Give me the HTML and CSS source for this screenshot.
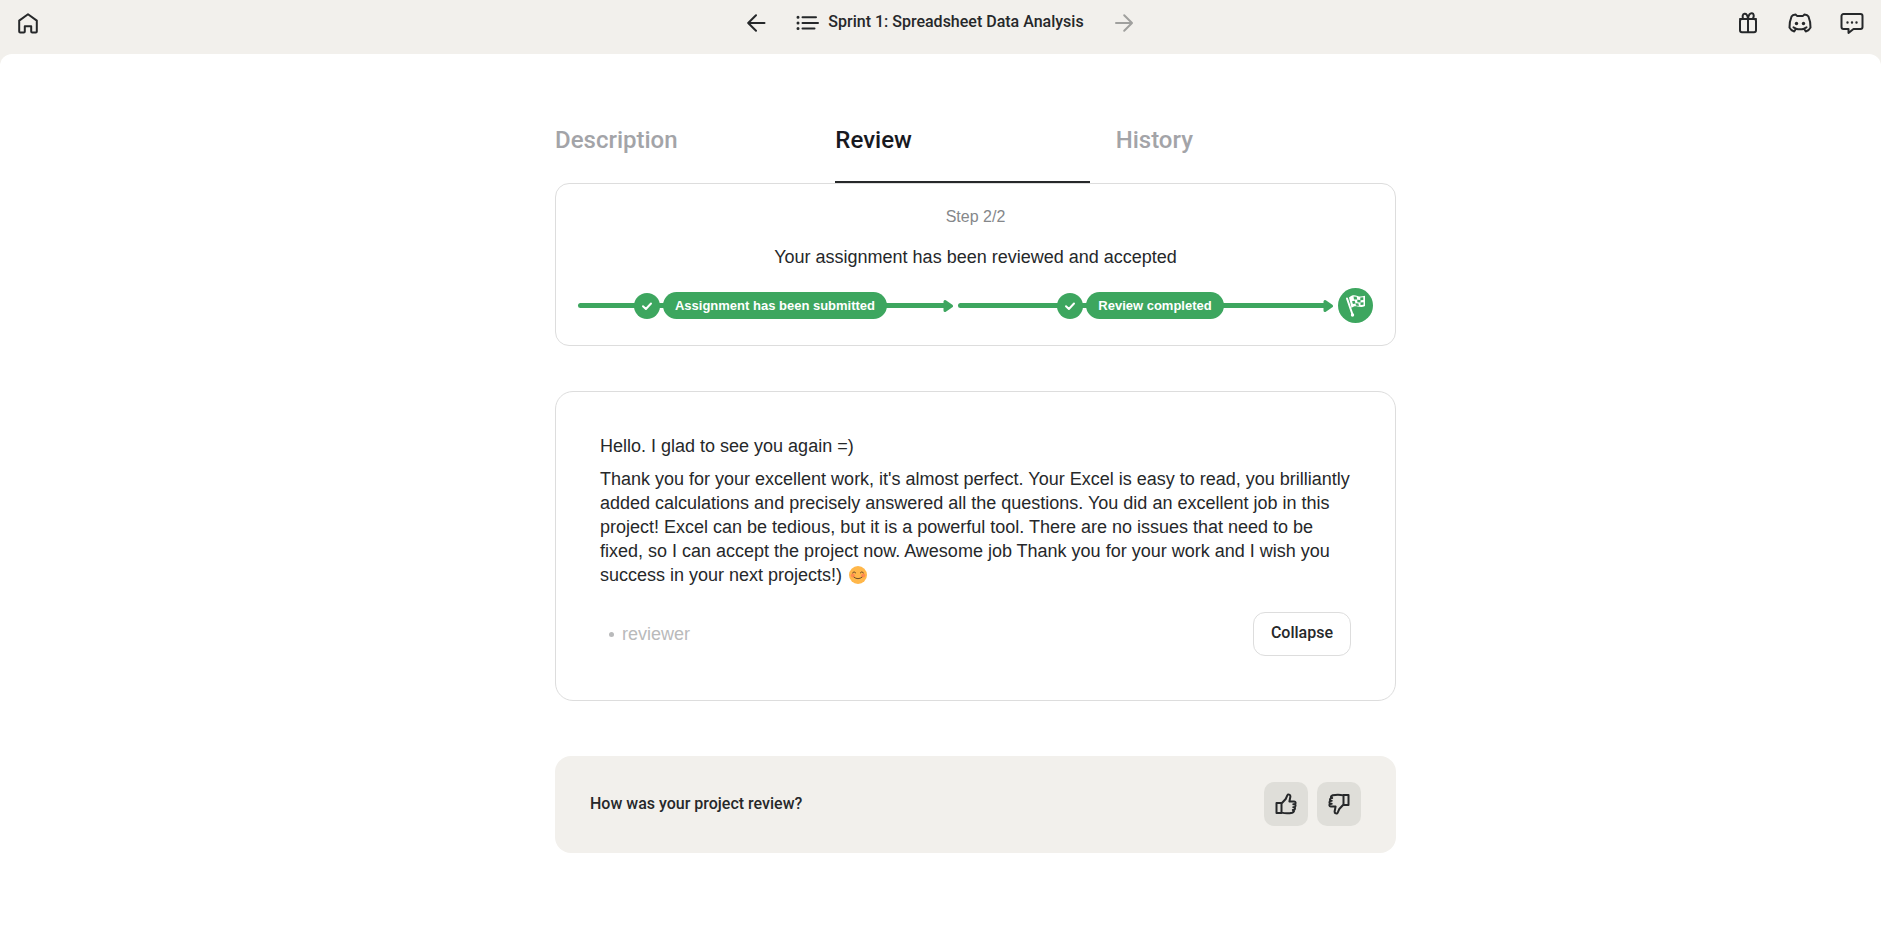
FILE: index.html
```html
<!DOCTYPE html>
<html lang="en">
<head>
<meta charset="utf-8">
<meta name="viewport" content="width=device-width, initial-scale=1">
<title>Sprint 1: Spreadsheet Data Analysis</title>
<link rel="stylesheet" href="styles.css">
</head>
<body>
<header class="topbar">
  <a class="icon-btn" href="#" aria-label="Home">
    <svg class="icon" viewBox="0 0 24 24"><path d="M3.2 20.4V9.6L12 3.2l8.800 6.400V20.400a1 1 0 0 1-1 1H16.200a1 1 0 0 1-1-1V15.300H8.800V20.400a1 1 0 0 1-1 1H4.200a1 1 0 0 1-1-1Z"/></svg>
  </a>
  <nav class="topbar-nav">
    <a class="icon-btn" href="#" aria-label="Previous">
      <svg class="icon" viewBox="0 0 24 24"><path d="M20.500 12H4.500M12 4.200 4.200 12l7.800 7.800"/></svg>
    </a>
    <button class="sprint" type="button">
      <svg class="icon" viewBox="0 0 24 24"><path d="M6.500 6.200H20M6.500 12H22M6.500 17.600H18.500"/><path class="dots" d="M2 6.200h.01M2 12h.01M2 17.600h.01"/></svg>
      <span class="sprint-title">Sprint 1: Spreadsheet Data Analysis</span>
    </button>
    <a class="icon-btn icon-btn-muted" href="#" aria-label="Next">
      <svg class="icon" viewBox="0 0 24 24"><path d="M4 12h15.500M12.200 4.200 20 12l-7.800 7.800"/></svg>
    </a>
  </nav>
  <div class="topbar-tools">
    <button class="icon-btn" type="button" aria-label="Gifts">
      <svg class="icon" viewBox="0 0 24 24"><rect x="4" y="8" width="16" height="13.200" rx="2"/><path d="M4 8h16M12 8v13M12 7.500C11.500 4 10 2.500 8.500 2.700 6.500 3 6.300 5.500 7 7.500M12 7.500C12.500 4 14 2 16 2.300c2 .3 2.200 3 1 5.200"/></svg>
    </button>
    <button class="icon-btn" type="button" aria-label="Discord">
      <svg class="icon" viewBox="0 0 24 24"><path d="M7.500 3.400 9 4.900h6l1.500-1.500c2 .2 3.200.9 4 2.200 1.300 3 2 7.100 2 11-1 2-2.800 3.400-4.700 3.800L16 17.700c-2.500.7-5.500.7-8 0l-1.800 2.700c-1.900-.4-3.700-1.800-4.700-3.800 0-3.900.7-8 2-11 .8-1.300 2-2 4-2.200ZM5.500 16.300 8 17.700M18.500 16.300 16 17.700"/><circle class="solid" cx="8.500" cy="12.500" r="1.700"/><circle class="solid" cx="15.500" cy="12.500" r="1.700"/></svg>
    </button>
    <button class="icon-btn" type="button" aria-label="Messages">
      <svg class="icon" viewBox="0 0 24 24"><path d="M3.500 3h17a2 2 0 0 1 2 2v11a2 2 0 0 1-2 2h-7L8.500 22V18h-5a2 2 0 0 1-2-2V5a2 2 0 0 1 2-2Z"/><path class="dots-small" d="M7.500 11.500h.01M12 11.500h.01M16.500 11.500h.01"/></svg>
    </button>
  </div>
</header>

<main class="sheet">
  <div class="column">
    <nav class="tabs">
      <a class="tab" href="#">Description</a>
      <a class="tab tab-active" href="#" aria-current="page">Review</a>
      <a class="tab" href="#">History</a>
    </nav>

    <section class="status">
      <p class="status-step">Step 2/2</p>
      <h1 class="status-title">Your assignment has been reviewed and accepted</h1>
      <div class="progress">
        <div class="stage">
          <span class="check"><svg class="check-mark" viewBox="0 0 12 12"><path d="M2 6.200 4.900 9 10 3.500"/></svg></span>
          <span class="pill">Assignment has been submitted</span>
          <svg class="arrow-head" viewBox="0 0 10 14"><path d="M2 2.500v9L8.500 7Z"/></svg>
        </div>
        <div class="stage">
          <span class="check"><svg class="check-mark" viewBox="0 0 12 12"><path d="M2 6.200 4.900 9 10 3.500"/></svg></span>
          <span class="pill">Review completed</span>
          <svg class="arrow-head" viewBox="0 0 10 14"><path d="M2 2.500v9L8.500 7Z"/></svg>
        </div>
        <svg class="finish" viewBox="0 0 35 35">
          <circle class="finish-disc" cx="17.500" cy="17.500" r="17.500"/>
          <path class="finish-pole" d="M9 10.500 14.500 26.500"/>
          <circle class="finish-white" cx="14.500" cy="27" r="1.700"/>
          <path class="finish-white" d="M11 9.500C14 6.500 17 7 19.500 8s5 .5 7.500-.3V18c-3 1.500-5 1-7.500.5s-4.500 0-6 1.500Z"/>
          <path class="finish-check" d="m15.500 8.500 3.200.3.500 2.800-3.200-.2ZM22.300 9.500l3-.2v2.600l-3 .3ZM19.300 11.700l3.200.3v2.600l-3.200-.3ZM14 13.300l2.700-.6.800 2.700-2.600.6ZM22.500 14.600l3-.3v2.500l-3 .3ZM17.600 15.300l2.900.2.300 2.400-2.900-.3Z"/>
        </svg>
      </div>
    </section>

    <article class="review">
      <p class="review-text">Hello. I glad to see you again =)</p>
      <p class="review-text">Thank you for your excellent work, it's almost perfect. Your Excel is easy to read, you brilliantly added calculations and precisely answered all the questions. You did an excellent job in this project! Excel can be tedious, but it is a powerful tool. There are no issues that need to be fixed, so I can accept the project now. Awesome job Thank you for your work and I wish you success in your next projects!) <svg class="smile" viewBox="0 0 18 18" role="img" aria-label="Smiling face"><circle class="smile-face" cx="9" cy="9" r="9"/><circle class="smile-cheek" cx="3.800" cy="9.500" r="2"/><circle class="smile-cheek" cx="14.200" cy="9.500" r="2"/><path d="M3.500 6.800q1.500-2.300 3.200 0M11.300 6.800q1.500-2.300 3.200 0M5 11.200q4 3.200 8 0"/></svg></p>
      <footer class="review-foot">
        <ul class="review-author"><li class="review-role">reviewer</li></ul>
        <button class="collapse" type="button">Collapse</button>
      </footer>
    </article>

    <section class="feedback">
      <h2 class="feedback-title">How was your project review?</h2>
      <div class="feedback-votes">
        <button class="vote" type="button" aria-label="Good">
          <svg class="icon" viewBox="0 0 24 24"><path d="M2.500 11h5V21h-5ZM7.500 11.500l4.200-4.500 1.700-3.800c.5-1.200 3.200-.8 3 1.300l-1 5h4.800c1.600 0 1.800 1.800.8 2.600l-1.700.1h1.700c.8.800.7 2.400-.3 2.900l-1.400.1h1.400c.6.900.3 2.300-.7 2.700h-1.200 1.200c.3 1.300-.3 2.200-1.800 2.800-3 .8-7 .9-10.700-.1"/></svg>
        </button>
        <button class="vote" type="button" aria-label="Bad">
          <svg class="icon icon-flip" viewBox="0 0 24 24"><path d="M2.500 11h5V21h-5ZM7.500 11.500l4.200-4.500 1.700-3.800c.5-1.200 3.200-.8 3 1.300l-1 5h4.800c1.600 0 1.800 1.800.8 2.600l-1.700.1h1.700c.8.800.7 2.400-.3 2.900l-1.400.1h1.400c.6.900.3 2.300-.7 2.700h-1.200 1.200c.3 1.300-.3 2.200-1.800 2.800-3 .8-7 .9-10.700-.1"/></svg>
        </button>
      </div>
    </section>
  </div>
</main>
</body>
</html>
```

FILE: styles.css
```css
:root {
  --ink: #26282a;
  --sand: #f2f0ec;
  --line: #dddddd;
  --green: #3da65f;
  --text-font: "Liberation Sans", Arial, sans-serif;
  --ui-font: Roboto, "Liberation Sans", sans-serif;
}

* { box-sizing: border-box; }

body {
  margin: 0;
  min-height: 100vh;
  display: flex;
  flex-direction: column;
  background: var(--sand);
  color: var(--ink);
  font: 400 18px/24px var(--text-font);
}

h1, h2, p, ul { margin: 0; }
a { color: inherit; text-decoration: none; }

button {
  padding: 0;
  border: 0;
  background: none;
  color: inherit;
  font: inherit;
  cursor: pointer;
}

/* Icons */
.icon {
  display: block;
  width: 24px;
  height: 24px;
  fill: none;
  stroke: currentColor;
  stroke-width: 2;
  stroke-linecap: round;
  stroke-linejoin: round;
}
.dots { stroke-width: 3; }
.dots-small { stroke-width: 2.4; }
.solid { fill: currentColor; stroke: none; }
.icon-flip { transform: rotate(180deg); }
.icon-btn { display: block; }
.icon-btn-muted { color: #a0a09e; }

/* Top bar */
.topbar {
  display: grid;
  grid-template-columns: 1fr auto 1fr;
  align-items: center;
  padding: 11px 17px 19px 16px;
}
.topbar > .icon-btn { justify-self: start; }
.topbar-nav { display: flex; gap: 28px; }
.sprint { display: flex; gap: 8px; }
.sprint-title { font: 500 16px/22px var(--ui-font); }
.topbar-tools { display: flex; justify-content: flex-end; gap: 28px; }

/* Page sheet */
.sheet {
  flex: 1;
  padding: 70px 0 80px 70px;
  border-radius: 12px 12px 0 0;
  background: #fff;
}
.column { max-width: 841px; margin: 0 auto; }

.tabs {
  display: grid;
  grid-template-columns: repeat(3, 1fr);
}
.tab {
  margin-right: 26px;
  padding-bottom: 25px;
  border-bottom: 2px solid transparent;
  color: #a3a4a8;
  font: 500 24px/32px var(--ui-font);
}
.tab-active { border-color: var(--ink); color: #18191f; }

/* Submission status */
.status {
  padding: 21px 22px 22px;
  border: 1px solid var(--line);
  border-radius: 14px;
  text-align: center;
}
.status-step { color: #85878a; font-size: 16px; }
.status-title { margin: 16px 0 19px; font-size: 18px; font-weight: 400; }

.progress { display: flex; align-items: center; gap: 5px; }
.stage {
  flex: 1;
  display: flex;
  align-items: center;
  background: linear-gradient(var(--green), var(--green)) center / calc(100% - 8px) 5px no-repeat;
}
.stage::before,
.stage::after {
  content: "";
  flex: 1;
  height: 5px;
  border-radius: 3px;
  background: var(--green);
}
.check {
  display: grid;
  place-items: center;
  width: 26px;
  height: 26px;
  margin-right: 3px;
  border-radius: 50%;
  background: var(--green);
}
.check-mark {
  width: 12px;
  height: 12px;
  fill: none;
  stroke: #fff;
  stroke-width: 2;
  stroke-linecap: round;
  stroke-linejoin: round;
}
.pill {
  padding: 0 12px;
  border-radius: 14px;
  background: var(--green);
  color: #fff;
  font-size: 13px;
  font-weight: 700;
  line-height: 27px;
}
.arrow-head {
  order: 1;
  width: 10px;
  height: 14px;
  fill: var(--green);
  stroke: var(--green);
  stroke-width: 3;
  stroke-linejoin: round;
}
.finish { width: 35px; height: 35px; }
.finish-disc, .finish-check { fill: var(--green); }
.finish-white { fill: #fff; }
.finish-pole { stroke: #fff; stroke-width: 2; stroke-linecap: round; }

/* Review message */
.review {
  margin-top: 45px;
  padding: 42px 44px 44px;
  border: 1px solid var(--line);
  border-radius: 18px;
}
.review-text + .review-text { margin-top: 9px; }
.smile {
  width: 18px;
  height: 18px;
  margin-left: 2px;
  vertical-align: -3px;
  fill: none;
  stroke: #6b4a2b;
  stroke-linecap: round;
}
.smile-face { fill: #ffb74a; stroke: none; }
.smile-cheek { fill: #ff8a50; stroke: none; }
.review-foot {
  display: flex;
  align-items: center;
  justify-content: space-between;
  margin-top: 25px;
}
.review-author {
  padding-left: 9px;
  color: #b9babb;
  list-style: none;
}
.review-role { display: flex; align-items: center; gap: 8px; }
.review-role::before {
  content: "";
  width: 5px;
  height: 5px;
  border-radius: 50%;
  background: currentColor;
}
.collapse {
  padding: 9px 17px 11px;
  border: 1px solid var(--line);
  border-radius: 12px;
  font: 500 16px/22px var(--ui-font);
}

/* Review rating */
.feedback {
  display: flex;
  align-items: center;
  justify-content: space-between;
  margin-top: 55px;
  padding: 26px 35px 27px;
  border-radius: 16px;
  background: var(--sand);
}
.feedback-title { font: 500 16px/24px var(--ui-font); }
.feedback-votes { display: flex; gap: 9px; }
.vote {
  display: grid;
  place-items: center;
  width: 44px;
  height: 44px;
  border-radius: 10px;
  background: #dfded9;
}
```
